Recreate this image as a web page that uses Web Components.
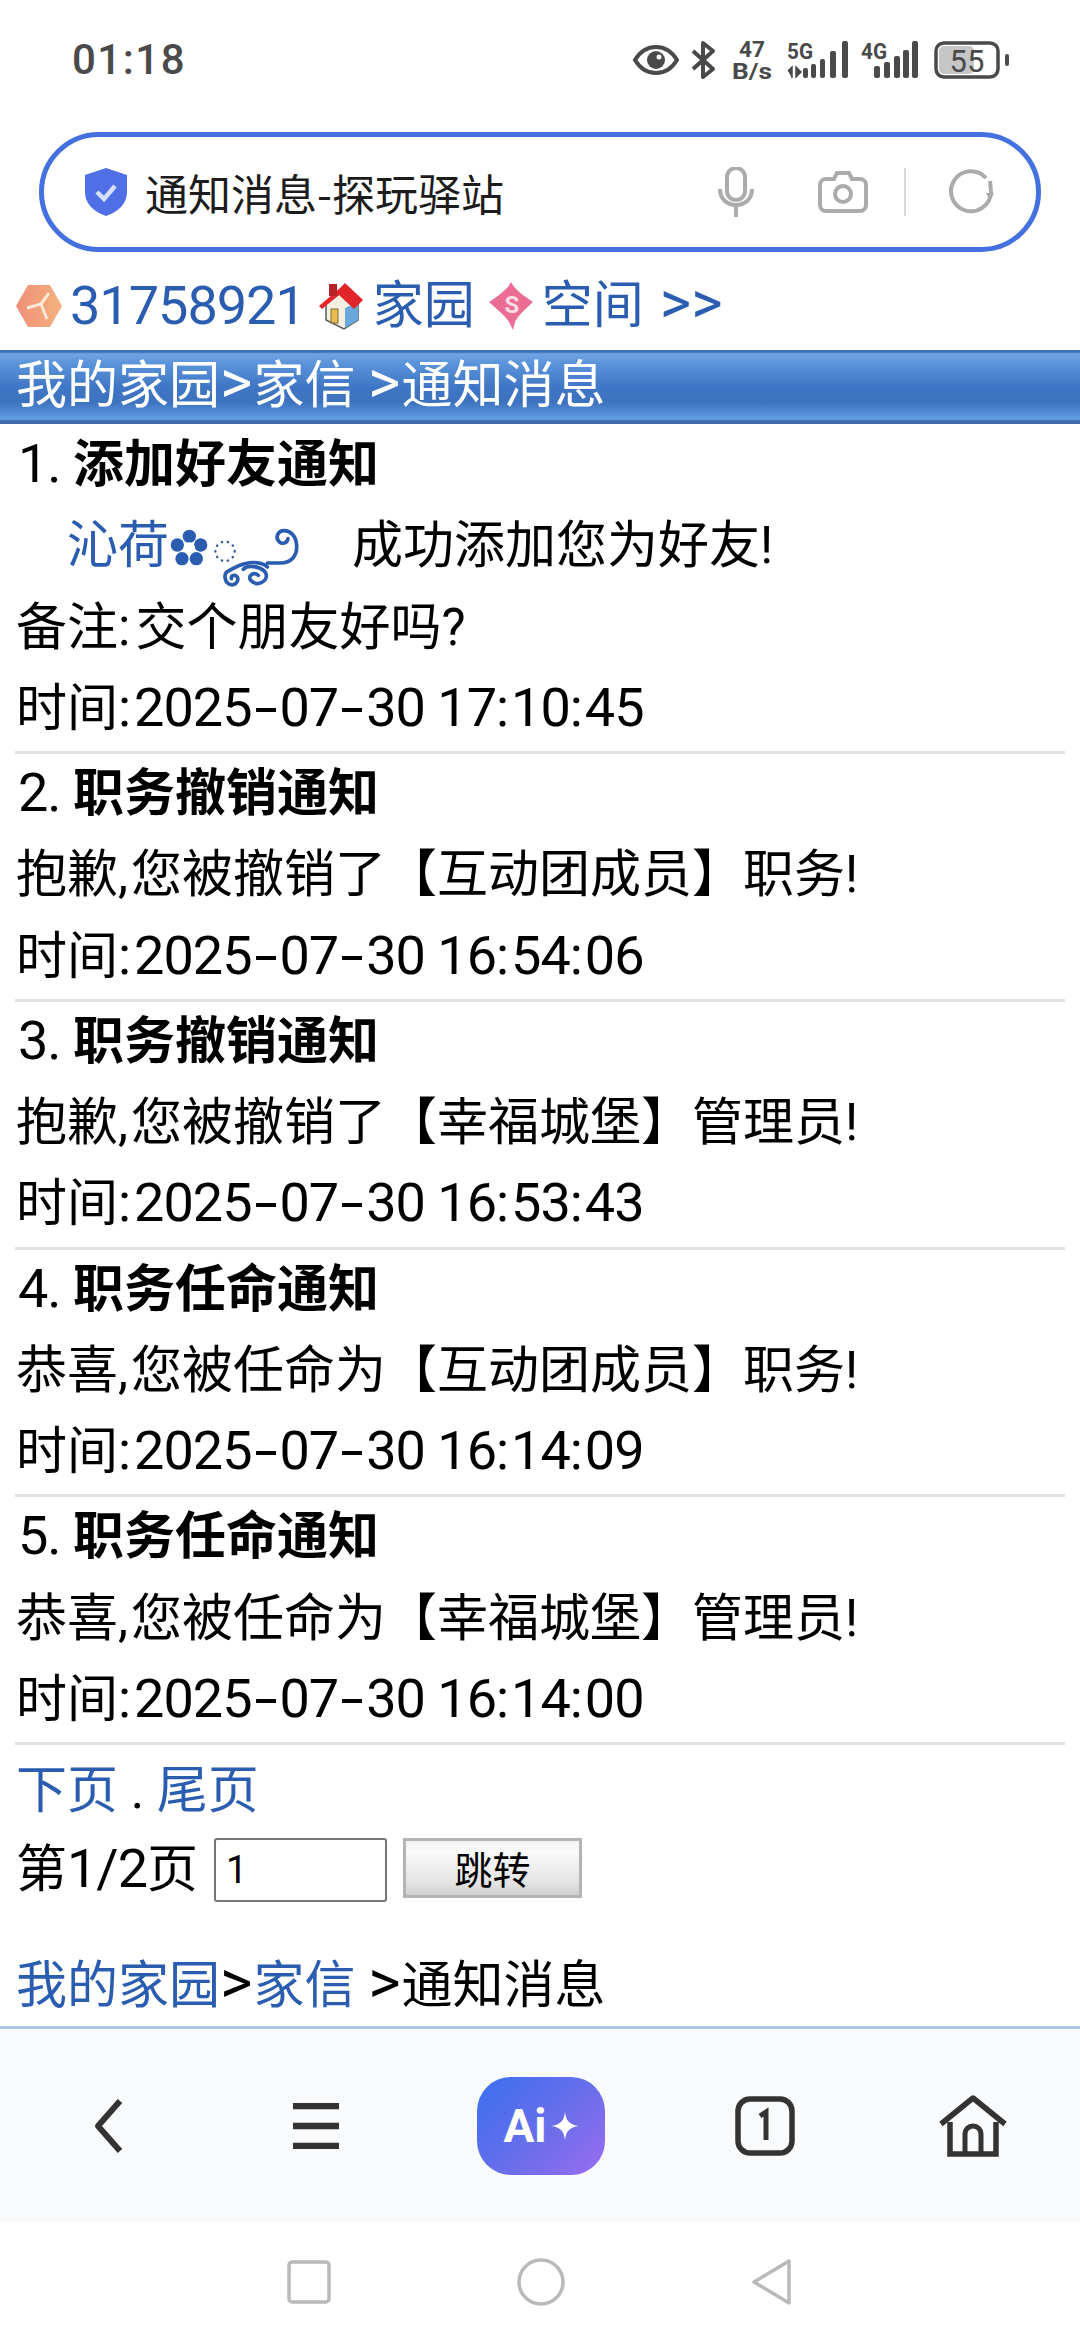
<!DOCTYPE html>
<html lang="zh">
<head>
<meta charset="utf-8">
<title>通知消息-探玩驿站</title>
<style>
  html, body { margin: 0; padding: 0; background: #fff; }
  body {
    width: 1080px; height: 2340px; overflow: hidden;
    display: flex; flex-direction: column;
    font: 51px/81.25px Roboto, "Noto Sans CJK SC", sans-serif; color: #000;
  }
  main { flex: 1; min-height: 0; }
  .gt { font-size: 62px; letter-spacing: 1px; line-height: 0; }
  .p { letter-spacing: 5px; }
  .q { letter-spacing: 3px; }
</style>
</head>
<body>
<status-bar></status-bar>
<url-bar label="通知消息-探玩驿站"></url-bar>
<quick-links></quick-links>
<crumb-head>我的家园<span class="gt">&gt;</span>家信 <span class="gt">&gt;</span>通知消息</crumb-head>
<main>
  <notice-item num="1." heading="添加好友通知">
    <friend-line></friend-line>
    <div>备注<span class="p">:</span>交个朋友好吗?</div>
    <time-line at="2025-07-30 17:10:45"></time-line>
  </notice-item>
  <notice-item num="2." heading="职务撤销通知">
    <div>抱歉<span class="q">,</span>您被撤销了【互动团成员】职务!</div>
    <time-line at="2025-07-30 16:54:06"></time-line>
  </notice-item>
  <notice-item num="3." heading="职务撤销通知">
    <div>抱歉<span class="q">,</span>您被撤销了【幸福城堡】管理员!</div>
    <time-line at="2025-07-30 16:53:43"></time-line>
  </notice-item>
  <notice-item num="4." heading="职务任命通知">
    <div>恭喜<span class="q">,</span>您被任命为【互动团成员】职务!</div>
    <time-line at="2025-07-30 16:14:09"></time-line>
  </notice-item>
  <notice-item num="5." heading="职务任命通知">
    <div>恭喜<span class="q">,</span>您被任命为【幸福城堡】管理员!</div>
    <time-line at="2025-07-30 16:14:00"></time-line>
  </notice-item>
  <page-nav></page-nav>
</main>
<bottom-toolbar></bottom-toolbar>
<system-nav></system-nav>

<script>
function define(name, html, setup) {
  customElements.define(name, class extends HTMLElement {
    constructor() {
      super();
      this.attachShadow({ mode: 'open' }).innerHTML = html;
    }
    connectedCallback() {
      if (setup) setup(this, this.shadowRoot);
    }
  });
}

// digits in the reference are tall and narrow, so size them up and pull them in
const NUM_CSS = `
  .n { font-size: 54px; letter-spacing: -1px; line-height: 0; }
  .gt { font-size: 62px; letter-spacing: 1px; line-height: 0; }
  .c { letter-spacing: 2px; }
  .c0 { letter-spacing: 3px; }
  .hy { display: inline-block; width: 28px; text-align: center; letter-spacing: 0; transform: scaleX(1.55); }
`;

define('status-bar', `
  <style>
    :host { display: flex; align-items: center; height: 120px; padding: 0 71px 0 72px; color: #4a4a4a; }
    .time { font: 500 42px/1 Roboto, sans-serif; letter-spacing: 1.5px; flex: 1; }
    .icons { display: flex; align-items: center; }
    svg { display: block; overflow: visible; }
    .bt { margin-left: 12px; }
    .sp { margin-left: 16px; }
    .s1 { margin-left: 15px; }
    .s2 { margin-left: 12px; }
    .bat { margin-left: 16px; }
    text { font-family: Roboto, sans-serif; font-weight: 700; fill: #4a4a4a; }
  </style>
  <div class="time">01:18</div>
  <div class="icons">
    <svg width="46" height="32" viewBox="0 0 46 32"><path d="M2 16C8 6 15 3 23 3s15 3 21 13c-6 10-13 13-21 13S8 26 2 16z" fill="none" stroke="#4a4a4a" stroke-width="4"/><circle cx="23" cy="16" r="9" fill="#4a4a4a"/><circle cx="26" cy="13" r="2.5" fill="#fff"/></svg>
    <svg class="bt" width="25" height="38" viewBox="0 0 25 38"><path d="M2 10l20 18-10 8V2l10 8L2 28" fill="none" stroke="#4a4a4a" stroke-width="4" stroke-linejoin="round"/></svg>
    <svg class="sp" width="40" height="40" viewBox="0 0 40 40"><text x="7" y="17" font-size="22" textLength="26" lengthAdjust="spacingAndGlyphs">47</text><text x="0" y="39" font-size="22" textLength="40" lengthAdjust="spacingAndGlyphs">B/s</text></svg>
    <svg class="s1" width="62" height="38" viewBox="0 0 62 38"><text x="0" y="18" font-size="22" textLength="26" lengthAdjust="spacingAndGlyphs">5G</text><path d="M1 30l4-4v11M9 26l5 5-5 5z" fill="#4a4a4a" stroke="#4a4a4a" stroke-width="1.5"/><rect x="16" y="27" width="5" height="10" rx="2" fill="#4a4a4a"/><rect x="24" y="23" width="5" height="14" rx="2" fill="#4a4a4a"/><rect x="33" y="18" width="5" height="19" rx="2" fill="#4a4a4a"/><rect x="43" y="10" width="6" height="27" rx="2" fill="#4a4a4a"/><rect x="55" y="0" width="6" height="37" rx="2" fill="#4a4a4a"/></svg>
    <svg class="s2" width="57" height="38" viewBox="0 0 57 38"><text x="0" y="18" font-size="22" textLength="26" lengthAdjust="spacingAndGlyphs">4G</text><rect x="13" y="25" width="6" height="12" rx="2" fill="#4a4a4a"/><rect x="23" y="21" width="6" height="16" rx="2" fill="#4a4a4a"/><rect x="33" y="15" width="6" height="22" rx="2" fill="#4a4a4a"/><rect x="42" y="9" width="6" height="28" rx="2" fill="#4a4a4a"/><rect x="51" y="0" width="6" height="37" rx="2" fill="#4a4a4a"/></svg>
    <svg class="bat" width="75" height="38" viewBox="0 0 75 38"><rect x="2" y="2" width="62" height="34" rx="8" fill="none" stroke="#4a4a4a" stroke-width="3.5"/><rect x="5" y="5" width="35" height="28" rx="5" fill="#c6c6c6"/><text x="33" y="31" font-size="31" text-anchor="middle" style="font-weight:400">55</text><rect x="71" y="13" width="4" height="12" rx="2" fill="#4a4a4a"/></svg>
  </div>
`);

define('url-bar', `
  <style>
    :host { display: flex; align-items: center; box-sizing: border-box; height: 120px; margin: 12px 39px 0 39px; padding: 0 42px 0 39px; border: 5px solid #4470e0; border-radius: 60px; background: #fff; }
    .label { flex: 1; margin-left: 16px; font: 43px/1 "Noto Sans CJK SC", sans-serif; color: #1c1c1c; }
    svg { display: block; }
    .cam { margin-left: 64px; }
    .sep { width: 2px; height: 48px; background: #d8d8d8; margin: 0 42px 0 36px; }
  </style>
  <svg width="46" height="50" viewBox="0 0 46 50"><path d="M23 1l21 7v17c0 12-9 20-21 24C11 45 2 37 2 25V8z" fill="#4f6fe6"/><path d="M14 25l7 7 11-13" fill="none" stroke="#d8e0ff" stroke-width="4.5"/></svg>
  <div class="label" id="t"></div>
  <svg width="36" height="50" viewBox="0 0 36 50"><rect x="9" y="1" width="18" height="32" rx="9" fill="none" stroke="#ababab" stroke-width="4"/><path d="M2 22c0 10 7 16 16 16s16-6 16-16M18 38v12" fill="none" stroke="#ababab" stroke-width="4"/></svg>
  <svg class="cam" width="50" height="42" viewBox="0 0 50 42"><path d="M8 8h8l3-6h12l3 6h8a6 6 0 0 1 6 6v20a6 6 0 0 1-6 6H8a6 6 0 0 1-6-6V14a6 6 0 0 1 6-6z" fill="none" stroke="#ababab" stroke-width="4"/><circle cx="25" cy="23" r="8" fill="none" stroke="#ababab" stroke-width="4"/></svg>
  <div class="sep"></div>
  <svg width="46" height="46" viewBox="0 0 46 46"><path d="M38 9A20 20 0 1 0 43 23M43 23l-1-11" fill="none" stroke="#ababab" stroke-width="4"/><path d="M38 24h8l-4 8z" fill="#ababab"/></svg>
`, (el, root) => { root.getElementById('t').textContent = el.getAttribute('label'); });

define('quick-links', `
  <style>
    :host { display: flex; align-items: center; box-sizing: border-box; height: 98px; padding: 10px 0 0 15px; color: #2a5db0; font-size: 51px; line-height: 88px; }
    svg { display: block; flex: none; }
    .id { margin-left: 7px; }
    .h { margin-left: 13px; }
    .t { margin-left: 9px; }
    .d { margin-left: 14px; }
    .more { margin-left: 16px; }
    .more .gt { letter-spacing: 0; font-size: 60px; }
    text { font-family: Roboto, sans-serif; font-weight: 700; }
    ${NUM_CSS}
  </style>
  <svg width="48" height="44" viewBox="0 0 48 44"><defs><linearGradient id="o" x1="0" x2="1"><stop offset="0" stop-color="#ef8f78"/><stop offset="1" stop-color="#f4b27c"/></linearGradient></defs><path d="M1 22L13 1h22l12 21-12 21H13z" fill="url(#o)"/><path d="M12 24l14-4 8-11M26 20l6 15" fill="none" stroke="#fde8d8" stroke-width="3"/></svg>
  <span class="id n">31758921</span>
  <svg class="h" width="46" height="48" viewBox="0 0 46 48"><path d="M8 22L24 10l16 12v16L26 47 8 38z" fill="#f4efe0" stroke="#5a5a5a" stroke-width="1.5"/><path d="M27 46V26l13-6v18z" fill="#6aa7dc"/><rect x="13" y="27" width="7" height="14" fill="#e8bc50" stroke="#7a6a30"/><path d="M1 24L22 6l5-5 18 17-9 9-15-14L4 27z" fill="#e2252b"/><rect x="11" y="2" width="8" height="12" fill="#b5222a"/></svg>
  <span class="t">家园</span>
  <svg class="d" width="44" height="48" viewBox="0 0 44 48"><path d="M22 0c3 7 13 14 22 20-7 7-15 13-18 20l-2 8-4-8C16 33 7 27 0 20 9 14 19 7 22 0z" fill="#ec6d94"/><text x="23" y="31" font-size="24" fill="#fbdde6" text-anchor="middle">S</text></svg>
  <span class="t">空间</span>
  <span class="more"><span class="gt">&gt;&gt;</span></span>
`);

define('crumb-head', `
  <style>
    :host { display: block; box-sizing: border-box; height: 74px; padding-left: 16px; line-height: 72px; font-size: 51px; color: #fff;
      background: linear-gradient(#3f6fb2 0, #3f6fb2 2px, #6fa5e4 4px, #5a92da 14px, #3f76c4 38px, #3d72be 52px, #5a94de 66px, #66a0e4 69px, #3d6aa8 71px, #3d6aa8 100%); }
  </style>
  <slot></slot>
`);

define('notice-item', `
  <style>
    :host { display: block; }
    .head { display: flex; padding-left: 18px; }
    .num { width: 55px; }
    b { font-weight: 700; }
    .lines { padding-left: 16px; }
    .rule { height: 3px; margin: 2px 15px -1px; background: #e2e2e2; }
    ${NUM_CSS}
  </style>
  <div class="head"><span class="num"><span class="n" id="n"></span></span><b id="h"></b></div>
  <div class="lines"><slot></slot></div>
  <div class="rule"></div>
`, (el, root) => {
  root.getElementById('n').textContent = el.getAttribute('num');
  root.getElementById('h').textContent = el.getAttribute('heading');
});

define('time-line', `
  <style>
    :host { display: block; }
    ${NUM_CSS}
  </style>
  <span id="v"></span>
`, (el, root) => {
  const parts = el.getAttribute('at')
    .replace(/-/g, '<span class="hy">-</span>')
    .replace(/:/g, '<span class="c">:</span>');
  root.getElementById('v').innerHTML = '时间<span class="n c0">:</span><span class="n">' + parts + '</span>';
});

define('friend-line', `
  <style>
    :host { display: flex; height: 81.25px; padding-left: 51px; }
    .name { color: #2a5db0; }
    svg { display: block; flex: none; margin: 7px 52px 0 -4px; }
  </style>
  <span class="name">沁荷</span>
  <svg width="135" height="80" viewBox="15 0 405 240" fill="none" stroke="#2a5db0" stroke-width="11" stroke-linecap="round">
    <g fill="#2a5db0" stroke="none">
      <circle cx="88" cy="73" r="20"/><circle cx="122" cy="99" r="20"/><circle cx="109" cy="140" r="20"/><circle cx="66" cy="140" r="20"/><circle cx="52" cy="99" r="20"/>
      <circle cx="88" cy="108" r="17" fill="#fff"/>
    </g>
    <circle cx="195" cy="118" r="29" stroke="#3a5a96" stroke-width="7" stroke-dasharray="1 17"/>
    <path d="M322 153H360C395 153 412 130 410 100C408 70 390 55 370 56C352 58 345 78 358 90C368 98 382 92 384 80"/>
    <path d="M322 165C310 152 280 148 255 155C230 160 218 172 203 178C192 184 192 205 205 215C222 225 238 210 232 195C225 185 212 192 214 200"/>
    <path d="M250 172C265 155 310 165 318 185C325 210 290 225 272 205C262 192 280 178 295 190"/>
  </svg>
  <span>成功添加您为好友!</span>
`);

define('page-nav', `
  <style>
    :host { display: block; padding: 6px 0 0 16px; }
    .lk { color: #2a5db0; }
    .jump { display: flex; align-items: center; height: 76px; }
    input { box-sizing: border-box; width: 173px; height: 64px; margin: 2px 16px 0 16px; padding: 0 10px; border: 2.5px solid #767676; border-radius: 3px; font: 38px Roboto, sans-serif; color: #000; background: #fff; outline: none; }
    button { box-sizing: border-box; width: 179px; height: 60px; margin-top: -2px; padding: 0; border: 3px solid #b4b4b4; background: linear-gradient(#f2f2f2, #fafafa 20%, #e2e2e2 80%, #cfcfcf); font: 38px/1 "Noto Sans CJK SC", sans-serif; color: #000; }
    .crumb { margin-top: 38px; }
    ${NUM_CSS}
  </style>
  <div><span class="lk">下页</span> . <span class="lk">尾页</span></div>
  <div class="jump"><span>第<span class="n">1/2</span>页</span><input value="1"><button>跳转</button></div>
  <div class="crumb"><span class="lk">我的家园</span><span class="gt">&gt;</span><span class="lk">家信</span> <span class="gt">&gt;</span>通知消息</div>
`);

define('bottom-toolbar', `
  <style>
    :host { display: flex; align-items: center; box-sizing: border-box; height: 197px; padding: 0 0 0 93px; border-top: 3px solid #adc6e6; background: #f9fafb; }
    svg { display: block; flex: none; }
    .menu { margin-left: 170px; }
    .ai { display: flex; align-items: center; justify-content: center; gap: 4px; width: 128px; height: 98px; margin-left: 138px; border-radius: 34px; background: linear-gradient(135deg, #3a6ff0, #6f6eea 60%, #9a6cf2); color: #fff; font: 700 46px/1 Roboto, sans-serif; }
    .tab { margin-left: 130px; }
    .home { margin-left: 143px; }
  </style>
  <svg width="30" height="56" viewBox="0 0 30 56"><path d="M27 3L5 28l22 25" fill="none" stroke="#333" stroke-width="6" stroke-linejoin="round"/></svg>
  <svg class="menu" width="46" height="46" viewBox="0 0 46 46"><path d="M0 3h46M0 23h46M0 43h46" stroke="#333" stroke-width="6.5"/></svg>
  <div class="ai"><span>Ai</span><svg width="28" height="28" viewBox="0 0 26 26"><path d="M13 0c1 8 4 12 13 13-9 1-12 5-13 13-1-8-4-12-13-13 9-1 12-5 13-13z" fill="#fff"/></svg></div>
  <svg class="tab" width="60" height="60" viewBox="0 0 60 60"><rect x="3" y="3" width="54" height="54" rx="12" fill="none" stroke="#333" stroke-width="5.5"/><path d="M25 20l6-4v28" fill="none" stroke="#333" stroke-width="5"/></svg>
  <svg class="home" width="70" height="62" viewBox="0 0 70 62"><path d="M3 29L35 3l32 26" fill="none" stroke="#333" stroke-width="5.5" stroke-linejoin="round"/><path d="M12 27v32h46V27" fill="none" stroke="#333" stroke-width="5.5"/><path d="M27 58V39a8 8 0 0 1 16 0v19" fill="none" stroke="#333" stroke-width="5"/></svg>
`);

define('system-nav', `
  <style>
    :host { display: flex; align-items: center; justify-content: center; gap: 186px; height: 117px; background: #fff; }
    svg { display: block; flex: none; }
  </style>
  <svg width="44" height="44" viewBox="0 0 44 44"><rect x="2" y="2" width="40" height="40" rx="3" fill="none" stroke="#b9b9b9" stroke-width="3.5"/></svg>
  <svg width="48" height="48" viewBox="0 0 48 48"><circle cx="24" cy="24" r="22" fill="none" stroke="#b9b9b9" stroke-width="3.5"/></svg>
  <svg width="42" height="48" viewBox="0 0 42 48"><path d="M38 3v42L3 24z" fill="none" stroke="#b9b9b9" stroke-width="3.5" stroke-linejoin="round"/></svg>
`);
</script>
</body>
</html>
